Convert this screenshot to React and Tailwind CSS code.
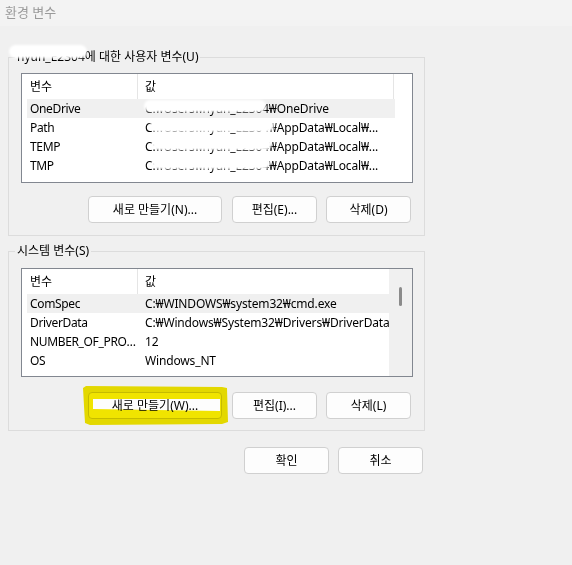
import React from 'react'

const FONT = "font-['Noto_Sans','Noto_Sans_CJK_KR',sans-serif]"

const USER_ROWS = [
  { name: 'OneDrive', value: 'C:₩Users₩hyun_E2304₩OneDrive' },
  { name: 'Path', value: 'C:₩Users₩hyun_E2304₩AppData₩Local₩...' },
  { name: 'TEMP', value: 'C:₩Users₩hyun_E2304₩AppData₩Local₩...' },
  { name: 'TMP', value: 'C:₩Users₩hyun_E2304₩AppData₩Local₩...' },
]

const SYSTEM_ROWS = [
  { name: 'ComSpec', value: 'C:₩WINDOWS₩system32₩cmd.exe' },
  { name: 'DriverData', value: 'C:₩Windows₩System32₩Drivers₩DriverData' },
  { name: 'NUMBER_OF_PROCESSORS', value: '12' },
  { name: 'OS', value: 'Windows_NT' },
]

function VarList({ rows, height, scroll }) {
  return (
    <div className="flex border border-[#828790] bg-white overflow-hidden" style={{ height }}>
      <div className="w-[372px] pl-[5px] shrink-0">
        {/* header */}
        <div className="flex h-[25px] items-center w-[367px] border-r border-[#e5e5e5]">
          <div className="w-[111px] h-full flex items-center pl-[3px] border-r border-[#e5e5e5]">변수</div>
          <div className="flex-1 pl-[7px]">값</div>
        </div>
        {rows.map((r, i) => (
          <div
            key={r.name}
            className={`flex h-[19px] items-center w-[368px] tracking-[-0.15px] ${i === 0 ? 'bg-[#f0f0f0]' : ''}`}
          >
            <div className="w-[111px] pl-[3px] pr-[1px] truncate tracking-[-0.35px]">{r.name}</div>
            <div className="flex-1 pl-[7px] pr-[4px] truncate">{r.value}</div>
          </div>
        ))}
      </div>
      {scroll ? (
        <div className="flex-1 bg-[#f0f0f0] flex justify-center pt-[18px] ml-[-5px]">
          <div className="w-[3px] h-[19px] rounded-full bg-[#8b8b8b] ml-[-1px]" />
        </div>
      ) : (
        <div className="flex-1" />
      )}
    </div>
  )
}

function Btn({ children, w }) {
  return (
    <button
      className="h-[27px] rounded-[4px] border border-[#d0d0d0] bg-[#fdfdfd] text-black text-[12px] flex items-center justify-center"
      style={{ width: w }}
    >
      {children}
    </button>
  )
}

function Group({ title, pt, children }) {
  return (
    <fieldset className="border border-[#dcdcdc] p-0 m-0">
      <legend className="ml-[6px] px-[2px] text-[12px] leading-[16px] text-black">{title}</legend>
      <div className="pl-[12px] pr-[11px]" style={{ paddingTop: pt }}>{children}</div>
    </fieldset>
  )
}

function Blob({ x, y, w, h }) {
  return (
    <div
      className="absolute bg-white rounded-full blur-[0.8px]"
      style={{ left: x, top: y, width: w, height: h }}
    />
  )
}

export default function App() {
  return (
    <div className={`relative w-[572px] h-[565px] bg-[#f0f0f0] text-[12px] text-black overflow-hidden ${FONT}`}>
      {/* title bar */}
      <div className="h-[26px] bg-[#f3f3f3] pl-[5px] flex items-center text-[13px] text-[#9a9a9a]">환경 변수</div>

      <div className="w-[417px] ml-[8px] mt-[23px]">
        <Group title="hyun_E2304에 대한 사용자 변수(U)" pt={8}>
          <VarList rows={USER_ROWS} height={110} />
          <div className="flex justify-end gap-[10px] mt-[13px] pb-[12px] pr-[2px]">
            <Btn w={134}>새로 만들기(N)...</Btn>
            <div className="flex gap-[9px]">
              <Btn w={85}>편집(E)...</Btn>
              <Btn w={85}>삭제(D)</Btn>
            </div>
          </div>
        </Group>

        <div className="mt-[7px]">
          <Group title="시스템 변수(S)" pt={9}>
            <VarList rows={SYSTEM_ROWS} height={109} scroll />
            <div className="flex justify-end gap-[10px] mt-[15px] pb-[11px] pr-[2px]">
              <div className="relative">
                <Btn w={134}>새로 만들기(W)...</Btn>
                {/* highlighter mark */}
                <svg
                  className="absolute left-[-6px] top-[-6px] mix-blend-multiply pointer-events-none"
                  width="147" height="39" viewBox="0 0 147 39"
                >
                  <path
                    fillRule="evenodd"
                    fill="#f2e600"
                    d="M1 2 L4 0 L140 1 L145 2 L146 36 L140 38 L8 39 L3 37 L2 20 Z M11 13 L11 23 L138 25 L138 13 Z"
                  />
                </svg>
              </div>
              <div className="flex gap-[9px]">
                <Btn w={85}>편집(I)...</Btn>
                <Btn w={85}>삭제(L)</Btn>
              </div>
            </div>
          </Group>
        </div>

        <div className="flex justify-end gap-[9px] mt-[16px] pr-[2px]">
          <Btn w={85}>확인</Btn>
          <Btn w={85}>취소</Btn>
        </div>
      </div>

      {/* privacy blur marks */}
      <Blob x={9} y={45} w={78} h={13} />
      <Blob x={144} y={100} w={122} h={12} />
      <Blob x={150} y={119} w={124} h={13} />
      <Blob x={152} y={138} w={120} h={12} />
      <Blob x={152} y={157} w={118} h={12} />
    </div>
  )
}
